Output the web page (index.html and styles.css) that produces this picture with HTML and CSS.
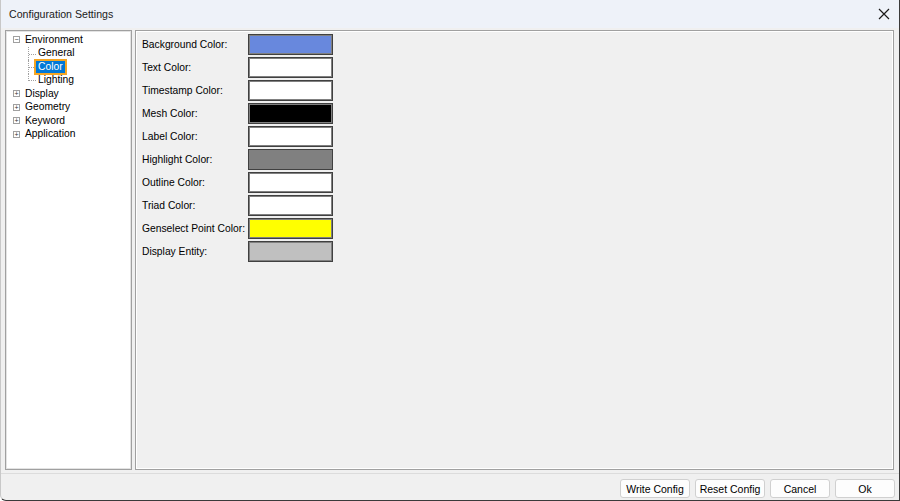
FILE: index.html
```html
<!DOCTYPE html>
<html lang="en">
<head>
  <meta charset="UTF-8">
  <title>Configuration Settings</title>
  <link rel="stylesheet" href="styles.css">
</head>
<body>

<div class="window">
  <div class="titlebar">
    <span class="title">Configuration Settings</span>
    <svg class="close" width="12" height="12" viewBox="0 0 12 12">
      <path d="M1 1 L11 11 M11 1 L1 11" stroke="#1a1a1a" stroke-width="1.2" fill="none"/>
    </svg>
  </div>

  <div class="body">
    <div class="panels">
      <div class="tree">
        <div class="node">
          <span class="box">&minus;</span><span class="label">Environment</span>
        </div>
        <div class="children">
          <div class="leaf"><span class="branch"></span><span class="label">General</span></div>
          <div class="leaf"><span class="branch"></span><span class="label selected">Color</span></div>
          <div class="leaf last"><span class="branch"></span><span class="label">Lighting</span></div>
        </div>
        <div class="node"><span class="box">+</span><span class="label">Display</span></div>
        <div class="node"><span class="box">+</span><span class="label">Geometry</span></div>
        <div class="node"><span class="box">+</span><span class="label">Keyword</span></div>
        <div class="node"><span class="box">+</span><span class="label">Application</span></div>
      </div>

      <div class="settings">
        <div class="row"><span class="name">Background Color:</span><span class="swatch sw-blue"></span></div>
        <div class="row"><span class="name">Text Color:</span><span class="swatch sw-white"></span></div>
        <div class="row"><span class="name">Timestamp Color:</span><span class="swatch sw-white"></span></div>
        <div class="row"><span class="name">Mesh Color:</span><span class="swatch sw-black"></span></div>
        <div class="row"><span class="name">Label Color:</span><span class="swatch sw-white"></span></div>
        <div class="row"><span class="name">Highlight Color:</span><span class="swatch sw-gray"></span></div>
        <div class="row"><span class="name">Outline Color:</span><span class="swatch sw-white"></span></div>
        <div class="row"><span class="name">Triad Color:</span><span class="swatch sw-white"></span></div>
        <div class="row"><span class="name">Genselect Point Color:</span><span class="swatch sw-yellow"></span></div>
        <div class="row"><span class="name">Display Entity:</span><span class="swatch sw-silver"></span></div>
      </div>
    </div>

    <div class="footer">
      <button class="btn btn-wide">Write Config</button>
      <button class="btn btn-wide">Reset Config</button>
      <button class="btn">Cancel</button>
      <button class="btn">Ok</button>
    </div>
  </div>
</div>

</body>
</html>
```

FILE: styles.css
```css
html, body {
  margin: 0;
  padding: 0;
  background: #ffffff;
}

body {
  font-family: 'Liberation Sans', Arial, sans-serif;
  font-size: 10.3px;
  color: #000;
}

.window {
  width: 900px;
  height: 501px;
  box-sizing: border-box;
  border-right: 1px solid #3a3a3a;
  border-bottom: 1px solid #3a3a3a;
  border-left: 1px solid #c8c8c8;
  border-bottom-left-radius: 6px;
  display: flex;
  flex-direction: column;
  overflow: hidden;
  background: #f0f0f0;
}

.titlebar {
  height: 28px;
  background: #eef2f9;
  display: flex;
  align-items: center;
  justify-content: space-between;
  padding: 0 9px 0 8px;
  flex-shrink: 0;
}

.title {
  font-family: 'Liberation Sans', Arial, sans-serif;
  font-size: 10.6px;
  color: #1a1a1a;
}

.body {
  flex: 1;
  display: flex;
  flex-direction: column;
  padding: 2px 5px 0 4px;
}

.panels {
  display: flex;
  gap: 3px;
  height: 440px;
}

.tree {
  width: 127px;
  box-sizing: border-box;
  background: #fff;
  border: 1px solid #a0a0a0;
  box-shadow: inset 0 0 0 1px #e3e3e3;
  padding: 2px 0 0 5px;
}

.node, .leaf {
  height: 13.5px;
  display: flex;
  align-items: center;
  white-space: nowrap;
}

.box {
  width: 7px;
  height: 7px;
  border: 1px solid #a0a0a0;
  box-sizing: border-box;
  font-size: 7px;
  line-height: 5px;
  text-align: center;
  color: #333;
  margin-right: 3px;
  margin-left: 2px;
}

.children .leaf {
  padding-left: 17px;
}

.branch {
  width: 8px;
  height: 13.5px;
  border-left: 1px dotted #a0a0a0;
  position: relative;
  box-sizing: border-box;
}

.branch::after {
  content: "";
  position: absolute;
  left: 0;
  top: 7px;
  width: 7px;
  border-top: 1px dotted #a0a0a0;
}

.leaf.last .branch {
  height: 7px;
  align-self: flex-start;
}

.leaf.last .branch::after {
  top: 6px;
}

.label {
  padding: 0 2px;
  line-height: 12px;
}

.label.selected {
  background: #0078d7;
  color: #fff;
  outline: 2px solid #f5a623;
}

.settings {
  flex: 1;
  border: 1px solid #a0a0a0;
  box-shadow: inset 0 0 0 1px #ffffff;
  background: #f0f0f0;
  padding: 3px 0 0 6px;
  display: flex;
  flex-direction: column;
  gap: 2px;
}

.row {
  display: flex;
  align-items: center;
  height: 21px;
}

.name {
  width: 106px;
  white-space: nowrap;
}

.swatch {
  width: 85px;
  height: 21px;
  box-sizing: border-box;
  border: 1px solid #404040;
  box-shadow: inset 0 0 0 1px #808080;
}

.sw-blue { background: #6888dd; }
.sw-white { background: #ffffff; }
.sw-black { background: #000000; }
.sw-gray { background: #808080; }
.sw-yellow { background: #ffff00; }
.sw-silver { background: #c0c0c0; }

.footer {
  border-top: 1px solid #dcdcdc;
  margin: 3px -5px 0 -4px;
  padding: 5px 4px 0 0;
  display: flex;
  justify-content: flex-end;
  gap: 5px;
}

.btn {
  width: 60px;
  height: 19px;
  padding: 0;
  font-family: 'Liberation Sans', Arial, sans-serif;
  font-size: 10.5px;
  color: #000;
  background: #fdfdfd;
  border: 1px solid #d0d0d0;
  border-radius: 3px;
}

.btn-wide {
  width: 70px;
}
```
